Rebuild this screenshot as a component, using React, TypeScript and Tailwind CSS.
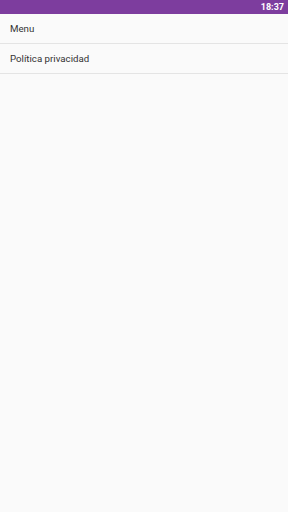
export default function App() {
  const items = ["Menu", "Política privacidad"]

  return (
    <div className="flex h-[512px] w-[288px] flex-col bg-[#fafafa] font-['Roboto',sans-serif]">
      <div className="flex h-[14px] items-center justify-end bg-[#7d3d9e] pr-[4px]">
        <span className="text-[9px] font-bold leading-none text-white">18:37</span>
      </div>
      {items.map((item) => (
        <div
          key={item}
          className="flex h-[30px] items-center border-b border-[#e4e4e4] pl-[10px] pt-[2px] text-[9.7px] text-[#333333]"
        >
          {item}
        </div>
      ))}
    </div>
  )
}
